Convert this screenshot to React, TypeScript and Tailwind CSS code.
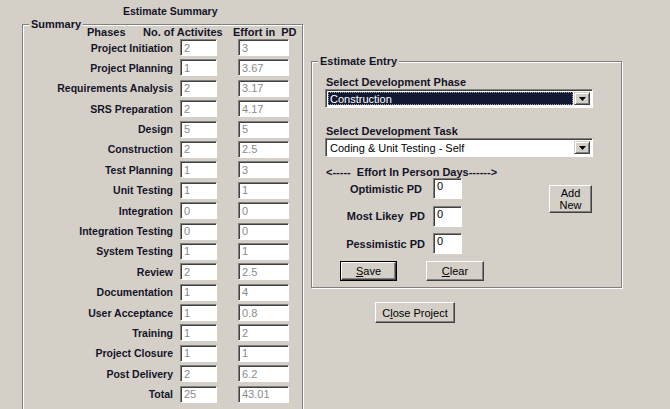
import React from 'react';

// summary rows: phase, no. of activities, effort in PD
const phases: [string, string, string][] = [
  ['Project Initiation', '2', '3'],
  ['Project Planning', '1', '3.67'],
  ['Requirements Analysis', '2', '3.17'],
  ['SRS Preparation', '2', '4.17'],
  ['Design', '5', '5'],
  ['Construction', '2', '2.5'],
  ['Test Planning', '1', '3'],
  ['Unit Testing', '1', '1'],
  ['Integration', '0', '0'],
  ['Integration Testing', '0', '0'],
  ['System Testing', '1', '1'],
  ['Review', '2', '2.5'],
  ['Documentation', '1', '4'],
  ['User Acceptance', '1', '0.8'],
  ['Training', '1', '2'],
  ['Project Closure', '1', '1'],
  ['Post Delivery', '2', '6.2'],
  ['Total', '25', '43.01'],
];

const sunken =
  'border border-t-[#808080] border-l-[#808080] border-b-white border-r-white shadow-[inset_1px_1px_0_#404040] bg-white';
const raised =
  'border border-t-white border-l-white border-b-[#404040] border-r-[#404040] shadow-[inset_-1px_-1px_0_#808080] bg-[#d4d0c8]';
const groupBox =
  'relative border border-[#808080] shadow-[inset_1px_1px_0_#fff,1px_1px_0_#fff]';

function ReadOnlyBox({ value, width }: { value: string; width: string }) {
  return (
    <input
      readOnly
      value={value}
      className={`${sunken} ${width} h-[17px] pl-[3px] text-[11px] font-normal text-[#8a8a8a] outline-none`}
    />
  );
}

function Caption({ children }: { children: React.ReactNode }) {
  return (
    <span className="absolute -top-[7px] left-[6px] bg-[#d4d0c8] px-[2px] leading-[12px]">
      {children}
    </span>
  );
}

function DropArrow() {
  return (
    <div className="flex h-full w-[16px] items-center justify-center border border-t-[#d4d0c8] border-l-[#d4d0c8] border-b-[#404040] border-r-[#404040] bg-[#d4d0c8] shadow-[inset_1px_1px_0_#fff,inset_-1px_-1px_0_#808080]">
      <svg width="7" height="4" viewBox="0 0 7 4">
        <path d="M0 0h7L3.5 4z" fill="#000" />
      </svg>
    </div>
  );
}

function Combo({ value, selected }: { value: string; selected?: boolean }) {
  return (
    <div className={`${sunken} ml-[13px] flex h-[19px] w-[268px] p-[2px]`}>
      <div
        className={
          selected
            ? 'mr-[1px] flex flex-1 items-center bg-[#121933] pl-[2px] text-[11px] font-normal text-white outline-1 outline-dotted outline-offset-[-1px] outline-[#9aa0b0]'
            : 'mr-[1px] flex flex-1 items-center pl-[2px] text-[11px] font-normal text-black'
        }
      >
        {value}
      </div>
      <DropArrow />
    </div>
  );
}

function PdRow({ label, extra }: { label: string; extra: string }) {
  return (
    <div className="flex h-[21px] items-center">
      <span className={`w-[113px] whitespace-pre text-right ${extra}`}>{label}</span>
      <input
        value="0"
        readOnly
        className={`${sunken} ml-[8px] h-[21px] w-[29px] pl-[3px] pb-[5px] text-[11px] font-normal text-black outline-none`}
      />
    </div>
  );
}

function Button({ children, className = '' }: { children: React.ReactNode; className?: string }) {
  return (
    <button className={`${raised} flex items-center justify-center text-[11px] font-normal leading-[12px] text-black ${className}`}>
      {children}
    </button>
  );
}

export default function App() {
  return (
    <div className="flex h-[409px] w-[670px] overflow-hidden bg-[#d4d0c8] font-['Liberation_Sans',Arial,sans-serif] text-[11px] font-bold leading-[12px] text-[#141428]">
      {/* left: estimate summary */}
      <div className="ml-[22px] flex w-[281px] flex-col">
        <div className="mt-[5px] pl-[101px] text-[10.5px]">Estimate Summary</div>
        <div className={`${groupBox} mt-[7px] h-[420px] shrink-0`}>
          <Caption>Summary</Caption>
          <div className="mt-[1px] flex whitespace-pre">
            <span className="ml-[64px] w-[56px]">Phases</span>
            <span className="w-[90px]">No. of Activites</span>
            <span>Effort in  PD</span>
          </div>
          <div className="mt-[1px] flex flex-col gap-[3.4px]">
            {phases.map(([name, count, effort]) => (
              <div key={name} className="flex h-[17px] items-center">
                <span className="w-[150px] text-right text-[10.5px]">{name}</span>
                <div className="ml-[7px]">
                  <ReadOnlyBox value={count} width="w-[37px]" />
                </div>
                <div className="ml-[21px]">
                  <ReadOnlyBox value={effort} width="w-[51px]" />
                </div>
              </div>
            ))}
          </div>
        </div>
      </div>

      {/* right: estimate entry */}
      <div className="ml-[8px] flex flex-col pt-[61px]">
        <div className={`${groupBox} h-[227px] w-[311px]`}>
          <Caption>Estimate Entry</Caption>
          <div className="mt-[14px] pl-[14px]">Select Development Phase</div>
          <div className="mt-[1px]">
            <Combo value="Construction" selected />
          </div>
          <div className="mt-[17px] pl-[14px]">Select Development Task</div>
          <div className="mt-[1px]">
            <Combo value="Coding & Unit Testing - Self" />
          </div>
          <div className="mt-[9px] whitespace-pre pl-[14px]">{'<-----  Effort In Person Days------>'}</div>
          <div className="flex">
            <div className="flex flex-col gap-[6.5px]">
              <PdRow label="Optimistic PD" extra="pr-[3px]" />
              <PdRow label="Most Likey  PD" extra="" />
              <PdRow label="Pessimistic PD" extra="" />
            </div>
            <Button className="ml-[87px] mt-[7px] h-[28px] w-[43px] flex-col">
              <span>Add</span>
              <span>New</span>
            </Button>
          </div>
          <div className="mt-[7px] flex">
            <div className="ml-[28px] border border-black">
              <Button className="h-[18px] w-[55px]">
                <span><span className="underline">S</span>ave</span>
              </Button>
            </div>
            <Button className="ml-[29px] h-[20px] w-[58px]">
              <span><span className="underline">C</span>lear</span>
            </Button>
          </div>
        </div>
        <Button className="ml-[64px] mt-[14px] h-[21px] w-[80px]">
          <span>C<span className="underline">l</span>ose Project</span>
        </Button>
      </div>
    </div>
  );
}
